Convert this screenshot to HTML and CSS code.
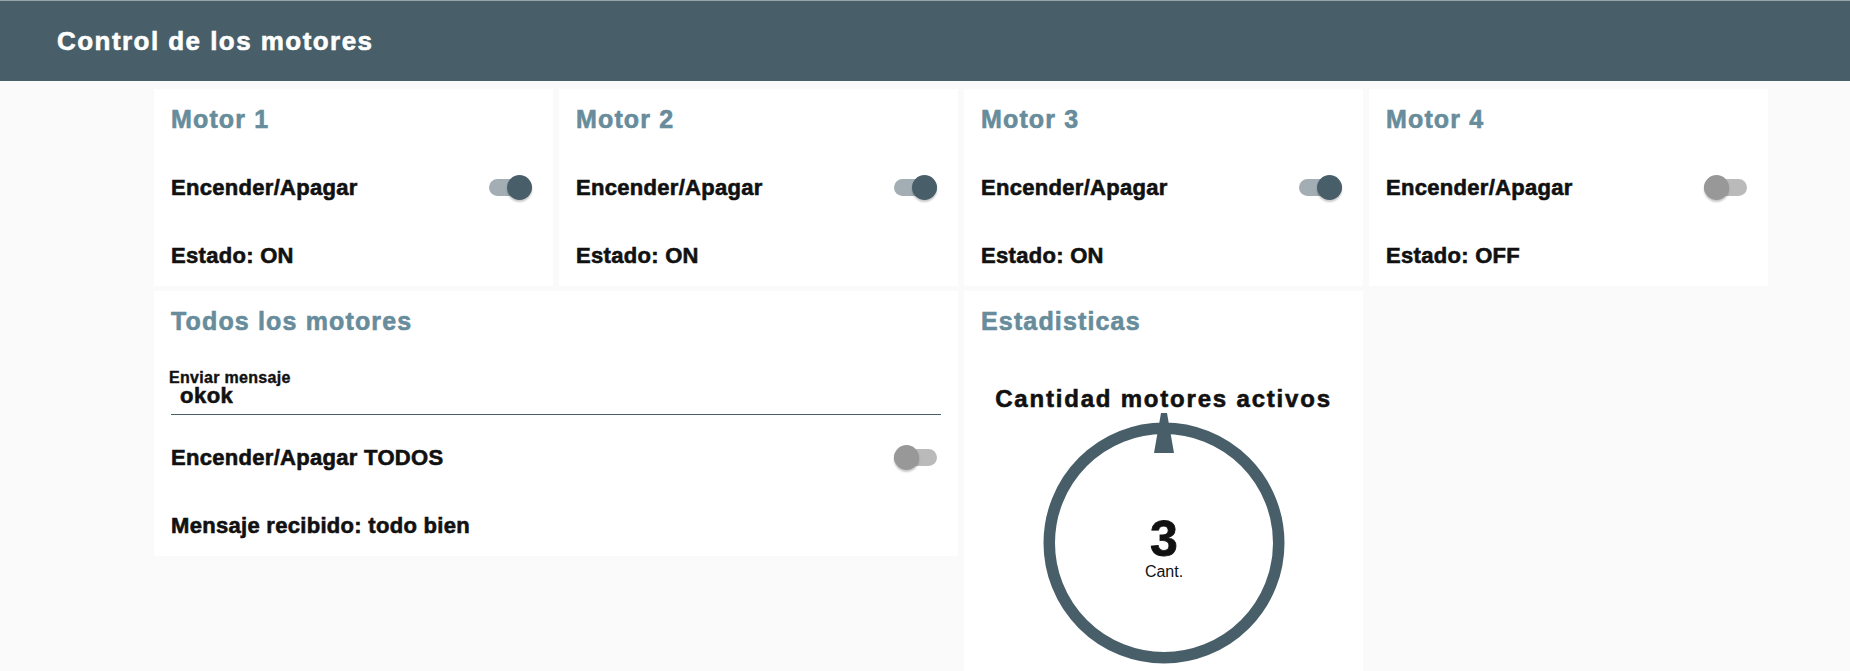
FILE: index.html
```html
<!DOCTYPE html>
<html lang="es">
<head>
<meta charset="utf-8">
<title>Control de los motores</title>
<link rel="stylesheet" href="styles.css">
</head>
<body>
<header class="topbar">
  <h1 class="topbar-title">Control de los motores</h1>
</header>
<main class="board">
  <section class="card">
    <h2 class="card-title">Motor 1</h2>
    <div class="row"><span class="row-text">Encender/Apagar</span><span class="switch on"><span class="track"></span><span class="knob"></span></span></div>
    <div class="row"><span class="row-text">Estado: ON</span></div>
  </section>
  <section class="card">
    <h2 class="card-title">Motor 2</h2>
    <div class="row"><span class="row-text">Encender/Apagar</span><span class="switch on"><span class="track"></span><span class="knob"></span></span></div>
    <div class="row"><span class="row-text">Estado: ON</span></div>
  </section>
  <section class="card">
    <h2 class="card-title">Motor 3</h2>
    <div class="row"><span class="row-text">Encender/Apagar</span><span class="switch on"><span class="track"></span><span class="knob"></span></span></div>
    <div class="row"><span class="row-text">Estado: ON</span></div>
  </section>
  <section class="card">
    <h2 class="card-title">Motor 4</h2>
    <div class="row"><span class="row-text">Encender/Apagar</span><span class="switch off"><span class="track"></span><span class="knob"></span></span></div>
    <div class="row"><span class="row-text">Estado: OFF</span></div>
  </section>
  <section class="card card-wide">
    <h2 class="card-title">Todos los motores</h2>
    <div class="field">
      <label class="field-label" for="msg">Enviar mensaje</label>
      <input class="field-input" id="msg" type="text" value="okok">
    </div>
    <div class="row"><span class="row-text">Encender/Apagar TODOS</span><span class="switch off"><span class="track"></span><span class="knob"></span></span></div>
    <div class="row"><span class="row-text">Mensaje recibido: todo bien</span></div>
  </section>
  <section class="card card-stats">
    <h2 class="card-title">Estadisticas</h2>
    <div class="gauge">
      <div class="gauge-title">Cantidad motores activos</div>
      <svg class="gauge-svg" width="260" height="260" viewBox="0 0 260 260">
        <circle cx="130" cy="130" r="114.75" fill="none" stroke="#485f6a" stroke-width="11.5"/>
        <polygon points="127,0 133,0 140,40 120,40" fill="#485f6a"/>
        <text x="130" y="142.5" text-anchor="middle" class="gauge-value">3</text>
        <text x="130" y="164" text-anchor="middle" class="gauge-unit">Cant.</text>
      </svg>
    </div>
  </section>
</main>
</body>
</html>
```
FILE: styles.css
```css
html, body {
  margin: 0;
  padding: 0;
}
body {
  background: #fafafa;
  font-family: "Liberation Sans", Arial, sans-serif;
  color: #111;
  height: 100vh;
  overflow: hidden;
}
.topbar {
  height: 80px;
  border-top: 1px solid #98a5ab;
  background: #485f6a;
  display: flex;
  align-items: center;
  padding-left: 57px;
}
.topbar-title {
  margin: 0;
  color: #fff;
  font-size: 26px;
  font-weight: bold;
  line-height: 30px;
  letter-spacing: 1.45px;
  -webkit-text-stroke: 0.6px #fff;
}
.board {
  display: grid;
  grid-template-columns: repeat(4, 399px);
  column-gap: 6px;
  row-gap: 5px;
  align-items: start;
  padding: 8px 0 0 154px;
}
.card {
  background: #fff;
  padding: 0 17px;
  display: flex;
  flex-direction: column;
  gap: 7px;
}
.card-wide {
  grid-column: span 2;
}
.card-title {
  margin: 0;
  height: 61px;
  display: flex;
  align-items: center;
  font-size: 25px;
  font-weight: bold;
  letter-spacing: 1.15px;
  color: #678c9b;
  -webkit-text-stroke: 0.6px #678c9b;
}
.row {
  height: 61px;
  display: flex;
  align-items: center;
  justify-content: space-between;
}
.row-text {
  font-size: 22px;
  font-weight: bold;
  letter-spacing: 0.3px;
  -webkit-text-stroke: 0.6px #111;
}
.switch {
  position: relative;
  width: 43px;
  height: 25px;
  margin-right: 4px;
  flex: none;
}
.switch .track {
  position: absolute;
  left: 0;
  right: 0;
  top: 4px;
  height: 17px;
  border-radius: 9px;
}
.switch .knob {
  position: absolute;
  top: 0;
  width: 25px;
  height: 25px;
  border-radius: 50%;
  box-shadow: 0 2px 2px rgba(0, 0, 0, 0.22);
}
.switch.on .track { background: #a3aeb4; }
.switch.on .knob { background: #485f6a; right: 0; }
.switch.off .track { background: #bababa; }
.switch.off .knob { background: #989898; left: 0; }
.field {
  height: 61px;
  box-sizing: border-box;
  padding-top: 11px;
  display: flex;
  flex-direction: column;
}
.field-label {
  font-size: 16px;
  font-weight: bold;
  line-height: 16px;
  letter-spacing: 0.3px;
  margin-left: -2px;
  -webkit-text-stroke: 0.4px #111;
}
.field-input {
  box-sizing: content-box;
  height: 20px;
  margin: 0;
  padding: 0 0 8px 9px;
  border: none;
  border-bottom: 1px solid #485f6a;
  background: transparent;
  font-family: "Liberation Sans", Arial, sans-serif;
  font-size: 22px;
  font-weight: bold;
  letter-spacing: 0.5px;
  color: #111;
  -webkit-text-stroke: 0.6px #111;
  outline: none;
}
.card-stats {
  padding-bottom: 40px;
}
.gauge {
  display: flex;
  flex-direction: column;
  align-items: center;
  padding-top: 26px;
}
.gauge-title {
  font-size: 24px;
  font-weight: bold;
  line-height: 28px;
  letter-spacing: 1.8px;
  color: #111;
  -webkit-text-stroke: 0.6px #111;
}
.gauge-svg {
  display: block;
}
.gauge-value {
  font-family: "Liberation Sans", Arial, sans-serif;
  font-size: 50px;
  font-weight: bold;
  fill: #111;
  stroke: #111;
  stroke-width: 0.8px;
}
.gauge-unit {
  font-family: "Liberation Sans", Arial, sans-serif;
  font-size: 16px;
  fill: #111;
}
```
